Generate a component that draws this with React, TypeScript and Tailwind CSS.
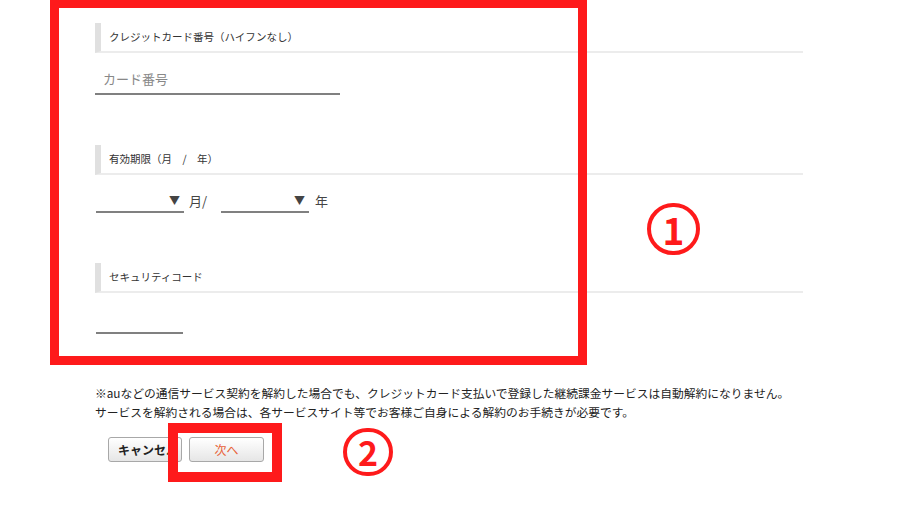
import React from "react";

function SectionHeader({ children }: { children: React.ReactNode }) {
  return (
    <div className="flex items-center h-[30px] border-l-[6px] border-l-[#e0e0e0] border-b-2 border-b-[#ececec] pl-2 text-[10.5px] text-[#333] leading-none">
      {children}
    </div>
  );
}

export default function App() {
  return (
    <div className="relative w-[900px] h-[506px] bg-white overflow-hidden font-['Noto_Sans_CJK_JP','Noto_Sans',sans-serif]">
      <div className="pl-[95px] pt-[23px] w-[803px]">
        <SectionHeader>クレジットカード番号（ハイフンなし）</SectionHeader>
        <div className="mt-[12px] w-[245px] h-[30px] border-b-2 border-[#808080] pl-2 flex items-center text-[13px] text-[#888]">
          カード番号
        </div>

        <div className="mt-[50px]">
          <SectionHeader>有効期限（月　/　年）</SectionHeader>
        </div>
        <div className="mt-[14px] flex items-center text-[13px] text-[#444]">
          <div className="ml-px w-[88px] h-[24px] border-b-2 border-[#808080] flex items-center justify-end pr-[4px] text-[11px] text-[#444]">
            ▼
          </div>
          <span className="ml-[5px]">月/</span>
          <div className="ml-[14px] w-[88px] h-[24px] border-b-2 border-[#808080] flex items-center justify-end pr-[4px] text-[11px] text-[#444]">
            ▼
          </div>
          <span className="ml-[6px]">年</span>
        </div>

        <div className="mt-[50px]">
          <SectionHeader>セキュリティコード</SectionHeader>
        </div>
        <div className="mt-[17px] ml-px w-[87px] h-[24px] border-b-2 border-[#808080]" />

        <div className="mt-[49px] text-[11.75px] leading-[19px] text-[#222] whitespace-nowrap">
          <p>※auなどの通信サービス契約を解約した場合でも、クレジットカード支払いで登録した継続課金サービスは自動解約になりません。</p>
          <p>サービスを解約される場合は、各サービスサイト等でお客様ご自身による解約のお手続きが必要です。</p>
        </div>

        <div className="mt-[16px] flex items-center">
          <button className="ml-[13px] w-[74px] h-[25px] rounded-[3px] border border-[#a8a8a8] bg-gradient-to-b from-white to-[#e6e6e6] text-[12px] text-[#222] font-bold flex items-center pl-[9px]">
            キャンセル
          </button>
          <button className="ml-[7px] w-[75px] h-[25px] rounded-[3px] border border-[#a8a8a8] bg-gradient-to-b from-white to-[#e6e6e6] text-[12px] text-[#e8633a] flex items-center justify-center">
            次へ
          </button>
        </div>
      </div>

      {/* annotations */}
      <div className="absolute left-[50px] top-[-1px] w-[537px] h-[366px] border-[9px] border-[#fe1a1b]" />
      <div className="absolute left-[168px] top-[423px] w-[114px] h-[59px] border-[10px] border-[#fe1a1b]" />
      <div className="absolute left-[647px] top-[203px] w-[53px] h-[52px] rounded-full border-[4px] border-[#fe1a1b] flex items-center justify-center text-[#fe1a1b] text-[37px] font-bold leading-none">
        1
      </div>
      <div className="absolute left-[343px] top-[428px] w-[50px] h-[48px] rounded-full border-[4px] border-[#fe1a1b] flex items-center justify-center text-[#fe1a1b] text-[34px] font-bold leading-none">
        2
      </div>
    </div>
  );
}
